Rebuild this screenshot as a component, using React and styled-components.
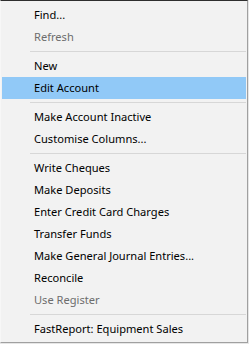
import React from "react";
import styled, { createGlobalStyle } from "styled-components";

const GlobalStyle = createGlobalStyle`
  html, body {
    margin: 0;
    padding: 0;
    background: #e6e6e6;
  }
`;

const Shadow = styled.div`
  width: 249px;
  height: 344px;
  box-sizing: border-box;
  padding: 0 1px 1px 0;
  background: #e6e6e6;
`;

const Menu = styled.div`
  height: 100%;
  box-sizing: border-box;
  background: #f2f2f2;
  border-top: 1px solid #2e2e2e;
  border-left: 1px solid #f7f7f7;
  border-right: 1px solid #a0a0a0;
  border-bottom: 1px solid #a0a0a0;
  padding: 3px 1px 2px 1px;
  display: flex;
  flex-direction: column;
  font-family: "Noto Sans", "Open Sans", sans-serif;
  font-size: 11.1px;
`;

const Item = styled.div`
  height: 22px;
  box-sizing: border-box;
  padding-bottom: 1px;
  display: flex;
  align-items: center;
  padding-left: 32px;
  color: ${(p) => (p.disabled ? "#6d6d6d" : "#000")};
  background: ${(p) => (p.active ? "#91c9f7" : "transparent")};
  white-space: nowrap;
`;

const Separator = styled.div`
  height: 7px;
  display: flex;
  align-items: center;
  padding-left: 28px;

  &::after {
    content: "";
    display: block;
    flex: 1;
    height: 1px;
    background: #d7d7d7;
  }
`;

const items = [
  { label: "Find..." },
  { label: "Refresh", disabled: true },
  "sep",
  { label: "New" },
  { label: "Edit Account", active: true },
  "sep",
  { label: "Make Account Inactive" },
  { label: "Customise Columns..." },
  "sep",
  { label: "Write Cheques" },
  { label: "Make Deposits" },
  { label: "Enter Credit Card Charges" },
  { label: "Transfer Funds" },
  { label: "Make General Journal Entries..." },
  { label: "Reconcile" },
  { label: "Use Register", disabled: true },
  "sep",
  { label: "FastReport: Equipment Sales" },
];

const App = () => {
  return (
    <>
      <GlobalStyle />
      <Shadow>
        <Menu>
          {items.map((it, i) =>
            it === "sep" ? (
              <Separator key={i} />
            ) : (
              <Item key={i} disabled={it.disabled} active={it.active}>
                {it.label}
              </Item>
            )
          )}
        </Menu>
      </Shadow>
    </>
  );
};

export default App;
